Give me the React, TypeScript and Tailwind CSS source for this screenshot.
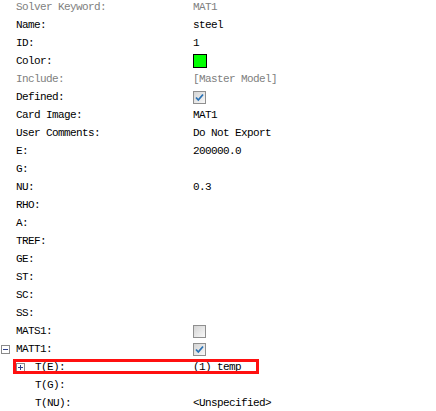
import React from "react";

type Row = {
  label: string;
  value?: React.ReactNode;
  muted?: boolean;
  indent?: number;
  toggle?: "plus" | "minus";
  highlight?: boolean;
};

function Swatch() {
  return <span className="block w-[14px] h-[14px] border border-black bg-[#00ff00]" />;
}

function Check({ checked }: { checked: boolean }) {
  return (
    <span className="relative block w-[13px] h-[13px] border border-[#8f8f8f] bg-gradient-to-br from-[#d4d4d4] to-[#f8f8f8]">
      {checked && (
        <svg viewBox="0 0 11 11" className="absolute inset-0 w-[11px] h-[11px]">
          <path d="M2 5.5 L4.3 8 L9 2.5" fill="none" stroke="#2a72b5" strokeWidth="1.8" />
        </svg>
      )}
    </span>
  );
}

function Toggle({ kind }: { kind: "plus" | "minus" }) {
  return (
    <span className="relative block w-[9px] h-[9px] border border-[#8a8a8a] bg-white">
      <span className="absolute left-[1px] top-[3px] w-[5px] h-[1px] bg-[#2d3f8c]" />
      {kind === "plus" && <span className="absolute left-[3px] top-[1px] w-[1px] h-[5px] bg-[#2d3f8c]" />}
    </span>
  );
}

const rows: Row[] = [
  { label: "Solver Keyword:", value: "MAT1", muted: true },
  { label: "Name:", value: "steel" },
  { label: "ID:", value: "1" },
  { label: "Color:", value: <Swatch /> },
  { label: "Include:", value: "[Master Model]", muted: true },
  { label: "Defined:", value: <Check checked /> },
  { label: "Card Image:", value: "MAT1" },
  { label: "User Comments:", value: "Do Not Export" },
  { label: "E:", value: "200000.0" },
  { label: "G:" },
  { label: "NU:", value: "0.3" },
  { label: "RHO:" },
  { label: "A:" },
  { label: "TREF:" },
  { label: "GE:" },
  { label: "ST:" },
  { label: "SC:" },
  { label: "SS:" },
  { label: "MATS1:", value: <Check checked={false} /> },
  { label: "MATT1:", value: <Check checked />, toggle: "minus" },
  { label: "T(E):", value: "(1) temp", indent: 1, toggle: "plus", highlight: true },
  { label: "T(G):", indent: 1 },
  { label: "T(NU):", value: "<Unspecified>", indent: 1 },
];

export default function App() {
  return (
    <div className="w-[436px] h-[411px] overflow-hidden bg-white font-['Liberation_Mono',monospace] text-[11px] tracking-[-0.6px] leading-none">
      <div className="-mt-[2px]">
        {rows.map((r) => (
          <div
            key={r.label}
            className={`relative flex items-center h-[18px] ${r.muted ? "text-[#808080]" : "text-black"}`}
          >
            <div className="w-[193px] flex items-center">
              <span className={`flex shrink-0 justify-start ${r.indent ? "w-[35px] pl-[16px]" : "w-[16px] pl-[1px]"}`}>
                {r.toggle && <Toggle kind={r.toggle} />}
              </span>
              <span className="whitespace-pre">{r.label}</span>
            </div>
            <div className="flex items-center whitespace-pre">{r.value}</div>
            {r.highlight && (
              <span className="absolute left-[13px] top-[1px] w-[246px] h-[15px] border-[3px] border-[#ff1010]" />
            )}
          </div>
        ))}
      </div>
    </div>
  );
}
